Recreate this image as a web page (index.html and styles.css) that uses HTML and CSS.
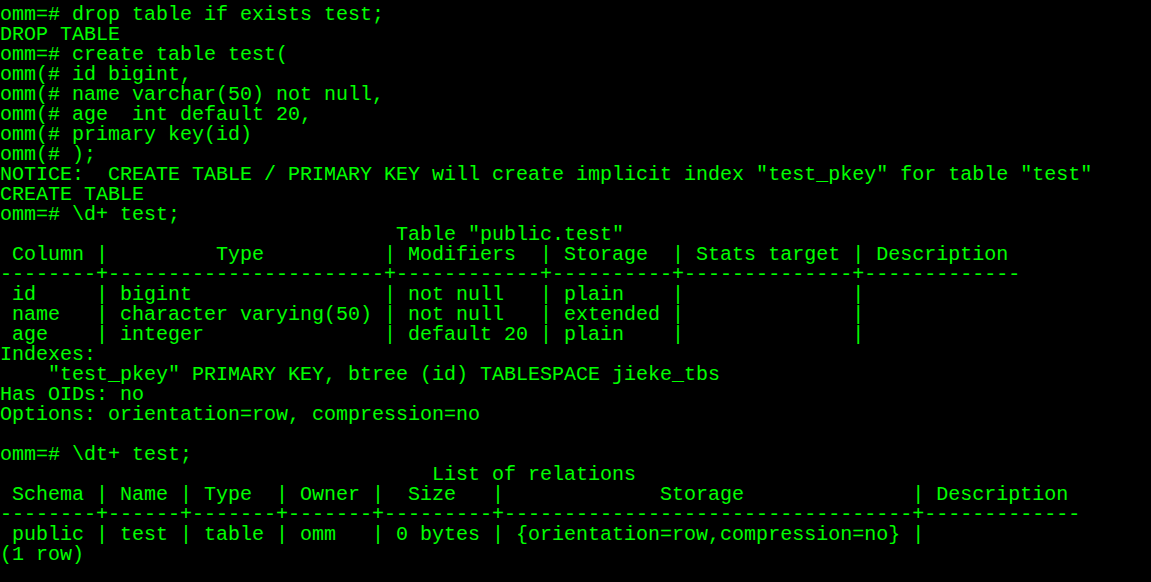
FILE: index.html
```html
<!DOCTYPE html>
<html>
<head>
<meta charset="utf-8">
<link rel="stylesheet" href="styles.css">
</head>
<body>
<div class="terminal">
<pre class="screen">omm=# 
omm=# drop table if exists test;
DROP TABLE
omm=# create table test(
omm(# id bigint,
omm(# name varchar(50) not null,
omm(# age  int default 20,
omm(# primary key(id)
omm(# );
NOTICE:  CREATE TABLE / PRIMARY KEY will create implicit index "test_pkey" for table "test"
CREATE TABLE
omm=# \d+ test;
                                 Table "public.test"
 Column |         Type          | Modifiers  | Storage  | Stats target | Description 
--------+-----------------------+------------+----------+--------------+-------------
 id     | bigint                | not null   | plain    |              | 
 name   | character varying(50) | not null   | extended |              | 
 age    | integer               | default 20 | plain    |              | 
Indexes:
    "test_pkey" PRIMARY KEY, btree (id) TABLESPACE jieke_tbs
Has OIDs: no
Options: orientation=row, compression=no

omm=# \dt+ test;
                                    List of relations
 Schema | Name | Type  | Owner |  Size   |             Storage              | Description 
--------+------+-------+-------+---------+----------------------------------+-------------
 public | test | table | omm   | 0 bytes | {orientation=row,compression=no} | 
(1 row)
</pre>
</div>
</body>
</html>
```
FILE: styles.css
```css
html, body {
  margin: 0;
  padding: 0;
  background: #000000;
  height: 100%;
  overflow: hidden;
}

.terminal {
  background: #000000;
  height: 582px;
  overflow: hidden;
}

.screen {
  margin: -15px 0 0 0;
  padding: 0;
  font-family: "Liberation Mono", "DejaVu Sans Mono", monospace;
  font-size: 20px;
  line-height: 20px;
  color: #00ff00;
  white-space: pre;
}
```
